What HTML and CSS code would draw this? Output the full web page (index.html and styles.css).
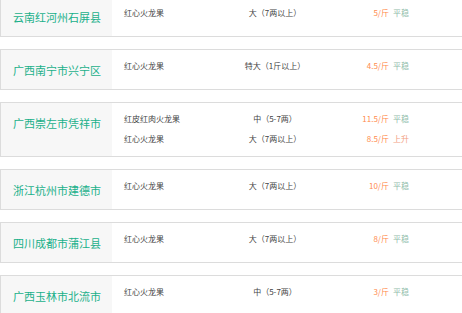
FILE: index.html
```html
<!DOCTYPE html>
<html lang="zh">
<head>
<meta charset="utf-8">
<link rel="stylesheet" href="styles.css">
</head>
<body>
<div class="list">
  <div class="card">
    <div class="area">云南红河州石屏县</div>
    <div class="rows">
      <div class="row"><span class="name">红心火龙果</span><span class="spec">大（7两以上）</span><span class="price">5/斤</span><span class="trend">平稳</span></div>
    </div>
  </div>
  <div class="card">
    <div class="area">广西南宁市兴宁区</div>
    <div class="rows">
      <div class="row"><span class="name">红心火龙果</span><span class="spec">特大（1斤以上）</span><span class="price">4.5/斤</span><span class="trend">平稳</span></div>
    </div>
  </div>
  <div class="card">
    <div class="area">广西崇左市凭祥市</div>
    <div class="rows">
      <div class="row"><span class="name">红皮红肉火龙果</span><span class="spec">中（5-7两）</span><span class="price">11.5/斤</span><span class="trend">平稳</span></div>
      <div class="row"><span class="name">红心火龙果</span><span class="spec">大（7两以上）</span><span class="price">8.5/斤</span><span class="trend up">上升</span></div>
    </div>
  </div>
  <div class="card">
    <div class="area">浙江杭州市建德市</div>
    <div class="rows">
      <div class="row"><span class="name">红心火龙果</span><span class="spec">大（7两以上）</span><span class="price">10/斤</span><span class="trend">平稳</span></div>
    </div>
  </div>
  <div class="card">
    <div class="area">四川成都市蒲江县</div>
    <div class="rows">
      <div class="row"><span class="name">红心火龙果</span><span class="spec">大（7两以上）</span><span class="price">8/斤</span><span class="trend">平稳</span></div>
    </div>
  </div>
  <div class="card">
    <div class="area">广西玉林市北流市</div>
    <div class="rows">
      <div class="row"><span class="name">红心火龙果</span><span class="spec">中（5-7两）</span><span class="price">3/斤</span><span class="trend">平稳</span></div>
    </div>
  </div>
</div>
</body>
</html>
```

FILE: styles.css
```css
html, body {
  margin: 0;
  padding: 0;
  background: #fff;
  overflow: hidden;
}
body {
  font-family: "Noto Sans CJK SC", "Noto Sans", sans-serif;
  width: 462px;
  height: 313px;
}
.list {
  margin-top: -4px;
  display: flex;
  flex-direction: column;
  gap: 12px;
  width: 100%;
}
.card {
  display: flex;
  border: 1px solid #dcdcdc;
  border-right: none;
}
.area {
  width: 111px;
  min-height: 39px;
  box-sizing: border-box;
  padding: 13px 0 0 12px;
  background: #f7f7f7;
  color: #1ab08a;
  font-size: 11px;
  line-height: 14px;
  white-space: nowrap;
}
.rows {
  flex: 1;
  min-width: 0;
  padding: 6px 0 7px 12px;
}
.row {
  display: grid;
  grid-template-columns: 100px 102px 63px auto;
  align-items: center;
  height: 20px;
  font-size: 8px;
  line-height: 20px;
  color: #444;
  white-space: nowrap;
  text-spacing-trim: space-all;
}
.spec {
  text-align: center;
}
.price {
  text-align: right;
  color: #ff8a4c;
}
.trend {
  padding-left: 4px;
  color: #8fbcaa;
}
.trend.up {
  color: #f3a283;
}
```
